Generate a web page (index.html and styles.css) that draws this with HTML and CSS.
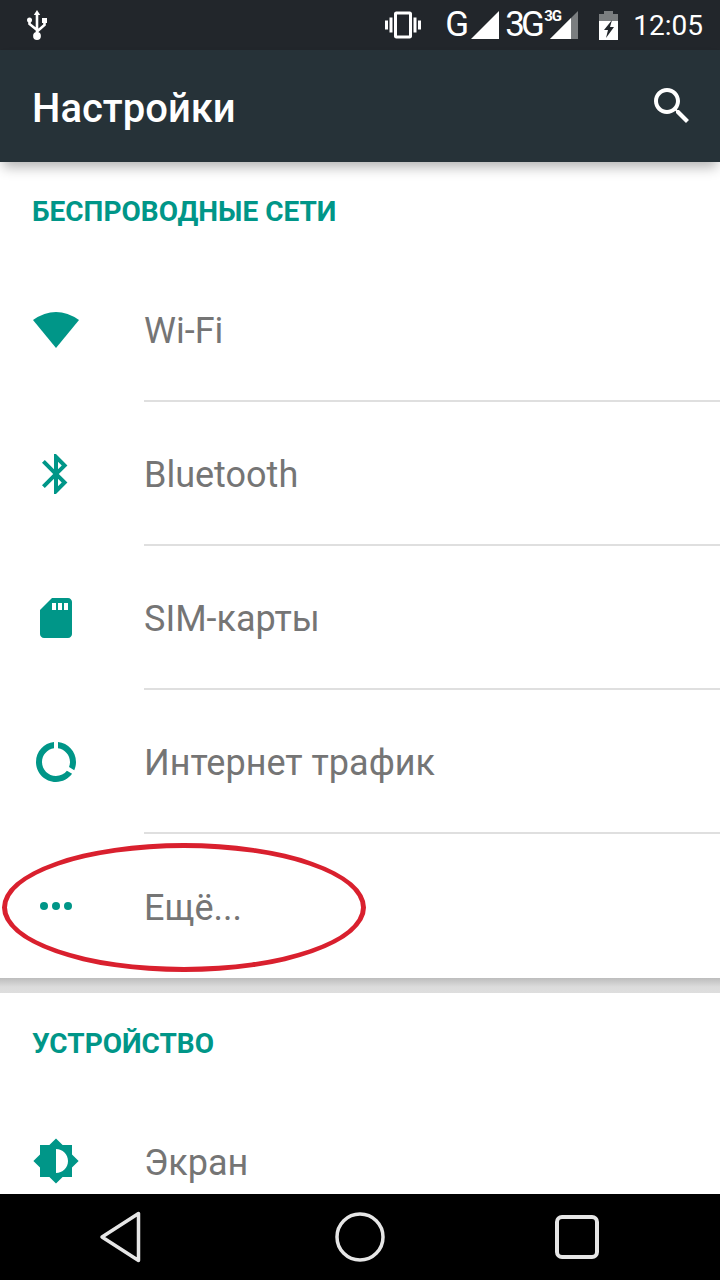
FILE: index.html
```html
<!DOCTYPE html>
<html lang="ru">
<head>
    <meta charset="UTF-8">
    <meta name="viewport" content="width=device-width, initial-scale=1.0">
    <title>Настройки</title>
    <link rel="stylesheet" href="styles.css">
</head>
<body>
    <div class="phone">

        <!-- Status bar -->
        <div class="status-bar">
            <svg class="usb-icon" viewBox="0 0 20 30" width="20" height="30">
                <path d="M10 0L13.2 5H6.8Z" fill="#fff"/>
                <path d="M10 4V27M2.5 10V14L10 20M17.5 10V15L10 21.5" fill="none" stroke="#fff" stroke-width="2.6"/>
                <circle cx="2.5" cy="10" r="2.5" fill="#fff"/>
                <path d="M15 8H20V13H15Z" fill="#fff"/>
                <circle cx="10" cy="26" r="3.9" fill="#fff"/>
            </svg>
            <div class="status-right">
                <svg class="vibrate-icon" viewBox="0 0 24 24" width="36" height="36">
                    <path d="M0 15h2V9H0v6zm3 2h2V7H3v10zm19-8v6h2V9h-2zm-3 8h2V7h-2v10zM16.5 3h-9C6.67 3 6 3.67 6 4.5v15c0 .83.67 1.5 1.5 1.5h9c.83 0 1.5-.67 1.5-1.5v-15c0-.83-.67-1.5-1.5-1.5zM16 19H8V5h8v14z" fill="#fff"/>
                </svg>
                <span class="net-label net-g">G</span>
                <svg class="signal-icon" viewBox="0 0 28 28" width="28" height="28">
                    <path d="M28 0V28H0Z" fill="#fff"/>
                </svg>
                <span class="net-label net-3g">3G</span>
                <div class="signal-wrap">
                    <span class="net-badge">3G</span>
                    <svg viewBox="0 0 28 28" width="28" height="28">
                        <path d="M28 0V28H0Z" fill="#7b7e80"/>
                        <path d="M21 7V28H0Z" fill="#fff"/>
                    </svg>
                </div>
                <svg class="battery-icon" viewBox="0 0 19 29" width="19" height="29">
                    <path d="M5 0H14V3H19V10H0V3H5Z" fill="#7b7e80"/>
                    <path d="M0 10H19V29H0Z" fill="#fff"/>
                    <path d="M13 9L5 19H9L7 27L15 16H11Z" fill="#22262b"/>
                </svg>
                <span class="clock">12:05</span>
            </div>
        </div>

        <!-- App bar -->
        <div class="app-bar">
            <h1>Настройки</h1>
            <svg viewBox="0 0 24 24" width="48" height="48">
                <path d="M15.5 14h-.79l-.28-.27C15.41 12.59 16 11.11 16 9.5 16 5.91 13.09 3 9.5 3S3 5.91 3 9.5 5.91 16 9.5 16c1.61 0 3.09-.59 4.23-1.57l.27.28v.79l5 4.99L20.49 19l-4.99-5zm-6 0C7.01 14 5 11.99 5 9.5S7.01 5 9.5 5 14 7.01 14 9.5 11.99 14 9.5 14z" fill="#fff"/>
            </svg>
        </div>

        <div class="content">
            <div class="section-title">БЕСПРОВОДНЫЕ СЕТИ</div>

            <div class="row">
                <svg class="row-icon" viewBox="0 0 48 48" width="48" height="48">
                    <path d="M1 14Q24 -2 47 14L24 42Z" fill="#009688"/>
                </svg>
                <div class="row-label">Wi-Fi</div>
            </div>

            <div class="row">
                <svg class="row-icon" viewBox="0 0 24 24" width="48" height="48">
                    <path d="M17.71 7.71L12 2h-1v7.59L6.41 5 5 6.41 10.59 12 5 17.59 6.41 19 11 14.41V22h1l5.71-5.71-4.3-4.29 4.3-4.29zM13 5.83l1.88 1.88L13 9.59V5.83zm1.88 10.46L13 18.17v-3.76l1.88 1.88z" fill="#009688"/>
                </svg>
                <div class="row-label">Bluetooth</div>
            </div>

            <div class="row">
                <svg class="row-icon" viewBox="0 0 24 24" width="48" height="48">
                    <path d="M10 2h8c1.1 0 2 .9 2 2v16c0 1.1-.9 2-2 2H6c-1.1 0-2-.9-2-2V8z" fill="#009688"/>
                    <path d="M10 4.5h2V8h-2zM13 4.5h2V8h-2zM16 4.5h2V8h-2z" fill="#fff"/>
                </svg>
                <div class="row-label">SIM-карты</div>
            </div>

            <div class="row">
                <svg class="row-icon" viewBox="0 0 24 24" width="48" height="48">
                    <path d="M13 2.05v3.03c3.39.49 6 3.39 6 6.92 0 .9-.18 1.75-.48 2.54l2.6 1.53c.56-1.24.88-2.62.88-4.07 0-5.18-3.95-9.45-9-9.95zM12 19c-3.87 0-7-3.13-7-7 0-3.53 2.61-6.43 6-6.92V2.05c-5.06.5-9 4.76-9 9.95 0 5.52 4.47 10 9.99 10 3.31 0 6.24-1.61 8.06-4.09l-2.6-1.53C16.17 17.98 14.21 19 12 19z" fill="#009688"/>
                </svg>
                <div class="row-label">Интернет трафик</div>
            </div>

            <div class="row row-last">
                <svg class="row-icon" viewBox="0 0 24 24" width="48" height="48">
                    <circle cx="6" cy="12" r="2" fill="#009688"/>
                    <circle cx="12" cy="12" r="2" fill="#009688"/>
                    <circle cx="18" cy="12" r="2" fill="#009688"/>
                </svg>
                <div class="row-label">Ещё...</div>
                <!-- red marker drawn over the screenshot -->
                <div class="marker"></div>
            </div>

            <div class="group-gap"></div>

            <div class="section-title section-title-second">УСТРОЙСТВО</div>

            <div class="row">
                <svg class="row-icon" viewBox="0 0 24 24" width="48" height="48">
                    <path d="M20 15.31L23.31 12 20 8.69V4h-4.69L12 .69 8.69 4H4v4.69L.69 12 4 15.31V20h4.69L12 23.31 15.31 20H20v-4.69zM12 18V6c3.31 0 6 2.69 6 6s-2.69 6-6 6z" fill="#009688"/>
                </svg>
                <div class="row-label">Экран</div>
            </div>
        </div>

        <!-- Navigation bar -->
        <div class="nav-bar">
            <svg viewBox="0 0 48 52" width="48" height="52">
                <path d="M42.5 2.5V49.5L6 26Z" fill="none" stroke="#e6e6e6" stroke-width="3.5" stroke-linejoin="round"/>
            </svg>
            <svg viewBox="0 0 52 52" width="52" height="52">
                <circle cx="26" cy="26" r="23" fill="none" stroke="#e6e6e6" stroke-width="3.5"/>
            </svg>
            <div class="nav-recent"></div>
        </div>

    </div>
</body>
</html>
```

FILE: styles.css
```css
* {
    box-sizing: border-box;
}

body {
    margin: 0;
    font-family: Roboto, "Noto Sans", sans-serif;
    background-color: #fff;
}

.phone {
    width: 720px;
    height: 1280px;
    display: flex;
    flex-direction: column;
    overflow: hidden;
}

/* Status bar */
.status-bar {
    height: 50px;
    flex-shrink: 0;
    display: flex;
    justify-content: space-between;
    align-items: center;
    padding: 0 17px 0 27px;
    background-color: #22262b;
    color: #fff;
}

.status-right {
    display: flex;
    align-items: center;
}

.net-label {
    font-weight: 400;
    font-size: 35px;
    line-height: 50px;
}

.net-g {
    margin-left: 24px;
    width: 26px;
}

.net-3g {
    margin-left: 6px;
    width: 45px;
    letter-spacing: -4px;
}

.signal-wrap {
    position: relative;
    height: 28px;
}

.net-badge {
    position: absolute;
    left: -6px;
    top: -3px;
    font-size: 15px;
    line-height: 17px;
    font-weight: 700;
    letter-spacing: -1px;
}

.signal-icon,
.signal-wrap svg {
    display: block;
}

.battery-icon {
    margin-left: 21px;
}

.clock {
    margin-left: 15px;
    font-size: 28px;
}

/* App bar */
.app-bar {
    height: 112px;
    flex-shrink: 0;
    display: flex;
    justify-content: space-between;
    align-items: center;
    padding: 0 24px 0 32px;
    background-color: #263238;
    box-shadow: 0 8px 12px -3px rgba(0, 0, 0, 0.3);
    position: relative;
}

.app-bar h1 {
    margin: 4px 0 0;
    font-size: 40px;
    font-weight: 500;
    color: #fff;
}

/* List */
.content {
    flex: 1;
    overflow: hidden;
}

.section-title {
    height: 96px;
    padding: 32px 32px 0;
    font-size: 28px;
    line-height: 36px;
    font-weight: 700;
    color: #009688;
}

.section-title-second {
    padding-top: 33px;
}

.row {
    position: relative;
    height: 144px;
    display: flex;
    padding-left: 32px;
}

.row-icon {
    flex-shrink: 0;
    align-self: center;
    margin-right: 64px;
}

.row-label {
    flex: 1;
    display: flex;
    align-items: center;
    font-size: 36px;
    color: #757575;
    border-bottom: 2px solid #dfdfdf;
    padding-top: 4px;
}

.row-last .row-label,
.content > .row:last-child .row-label {
    border-bottom: none;
}

.marker {
    position: absolute;
    left: 2px;
    top: 9px;
    width: 364px;
    height: 129px;
    border: 5px solid #d9202e;
    border-radius: 50%;
}

.group-gap {
    height: 15px;
    background: linear-gradient(#bdbdbd, #dcdcdc 60%, #dedede);
}

/* Navigation bar */
.nav-bar {
    height: 86px;
    flex-shrink: 0;
    display: flex;
    align-items: center;
    padding-left: 96px;
    background-color: #000;
}

.nav-bar svg {
    margin-right: 190px;
}

.nav-recent {
    width: 44px;
    height: 44px;
    margin-left: -21px;
    border: 4px solid #e6e6e6;
    border-radius: 7px;
}
```
